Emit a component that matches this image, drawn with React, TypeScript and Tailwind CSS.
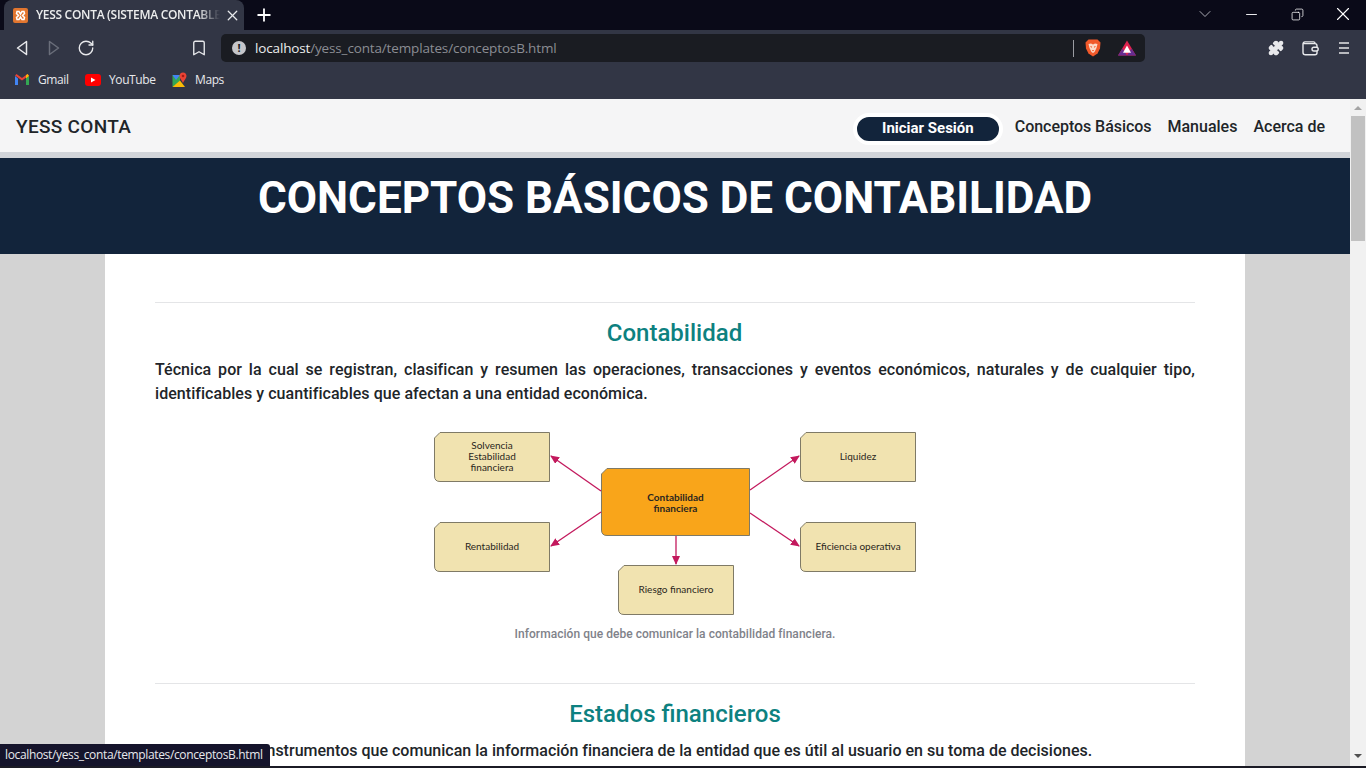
import { ChevronDown, Minus, X, Plus, Copy, RotateCw, Bookmark, Puzzle } from "lucide-react";

const bodyFont = "font-['Roboto','Liberation_Sans',sans-serif]";

function BackArrow() {
  return (
    <svg width="14" height="16" viewBox="0 0 14 16" fill="none" stroke="#e8e9ec" strokeWidth="1.5" strokeLinejoin="round">
      <path d="M11.5 1.5 L2.5 8 L11.5 14.5 Z" />
    </svg>
  );
}

function ForwardArrow() {
  return (
    <svg width="14" height="16" viewBox="0 0 14 16" fill="none" stroke="#6a6e7a" strokeWidth="1.5" strokeLinejoin="round">
      <path d="M2.5 1.5 L11.5 8 L2.5 14.5 Z" />
    </svg>
  );
}

function XamppIcon() {
  return (
    <div className="w-[15px] h-[15px] rounded-[2px] bg-[#e2762f] flex items-center justify-center">
      <svg width="11" height="11" viewBox="0 0 11 11" fill="none" stroke="#fff" strokeWidth="1.5">
        <path d="M2 1.5 L4 1.5 L5.5 4 L7 1.5 L9 1.5 L9.5 3.5 L7.5 5.5 L9.5 7.5 L9 9.5 L7 9.5 L5.5 7 L4 9.5 L2 9.5 L1.5 7.5 L3.5 5.5 L1.5 3.5 Z" />
      </svg>
    </div>
  );
}

function BraveIcon() {
  return (
    <svg width="16" height="18" viewBox="0 0 16 18">
      <path d="M3.5 0.5 L12.5 0.5 L15.5 3.5 L15 9.5 L12.5 14.5 L8 17.5 L3.5 14.5 L1 9.5 L0.5 3.5 Z" fill="#f1592a" />
      <path d="M3.5 5 L6 4.5 L8 5.5 L10 4.5 L12.5 5 L11.5 9 L9.5 13 L8 14 L6.5 13 L4.5 9 Z" fill="#fbd9c8" />
      <path d="M5 7 L7 7.6 L6.6 9 Z M11 7 L9 7.6 L9.4 9 Z M6.8 11 L9.2 11 L8 12.4 Z" fill="#f1592a" />
    </svg>
  );
}

function BatIcon() {
  return (
    <svg width="18" height="16" viewBox="0 0 18 16">
      <path d="M9 0.5 L18 15.5 L0 15.5 Z" fill="#e0234e" />
      <path d="M0 15.5 L4.5 8.5 L9 15.5 L13.5 8.5 L18 15.5 Z" fill="#662d91" />
      <path d="M9 5.5 L13 12.8 L5 12.8 Z" fill="#fff" />
    </svg>
  );
}

function WalletIcon() {
  return (
    <svg width="17" height="15" viewBox="0 0 17 15" fill="none" stroke="#e8e9ec" strokeWidth="1.4">
      <path d="M13 2.6 V2.2 C13 1.3 12.4 0.9 11.5 0.9 H3 C1.8 0.9 1 1.8 1 3 V11.5 C1 12.9 2 13.8 3.4 13.8 H13 C14.2 13.8 15 13 15 11.8 V4.8 C15 3.4 14.2 2.6 13 2.6 H1.5" />
      <rect x="10" y="6.2" width="6.2" height="3.8" rx="1.9" fill="#323645" />
    </svg>
  );
}

function MenuIcon() {
  return (
    <svg width="10" height="14" viewBox="0 0 10 14" stroke="#b8b9be" strokeWidth="2">
      <path d="M0 2 H10 M0 7 H10 M0 12 H10" />
    </svg>
  );
}

function GmailIcon() {
  return (
    <svg width="14" height="11" viewBox="0 0 14 11">
      <path d="M0 2 L0 11 L3 11 L3 4.5 Z" fill="#4285f4" />
      <path d="M14 2 L14 11 L11 11 L11 4.5 Z" fill="#34a853" />
      <path d="M0 1.5 L7 6.5 L14 1.5 L12.5 0 L7 4 L1.5 0 Z" fill="#ea4335" />
      <path d="M11 4.5 L14 2 L12.5 0 L11 1.2 Z" fill="#fbbc04" />
    </svg>
  );
}

function YoutubeIcon() {
  return (
    <div className="w-[16px] h-[12px] rounded-[3px] bg-[#f00] flex items-center justify-center">
      <svg width="6" height="6" viewBox="0 0 6 6">
        <path d="M1 0.5 L5.5 3 L1 5.5 Z" fill="#fff" />
      </svg>
    </div>
  );
}

function MapsIcon() {
  return (
    <svg width="15" height="16" viewBox="0 0 15 16">
      <path d="M0.5 3 L8 3 L8 10 L0.5 15 Z" fill="#34a853" />
      <path d="M0.5 15 L8 8.5 L13 15 Z" fill="#fbbc04" />
      <path d="M0.5 3 L8 3 L4 8 Z" fill="#4285f4" />
      <path d="M11 0.5 C13.2 0.5 14.5 2.2 14.5 4 C14.5 6.5 11.8 8.5 11 11 C10.2 8.5 7.5 6.5 7.5 4 C7.5 2.2 8.8 0.5 11 0.5 Z" fill="#ea4335" />
      <circle cx="11" cy="4" r="1.3" fill="#a61c14" />
    </svg>
  );
}

function Bookmarks() {
  const items = [
    { label: "Gmail", icon: <GmailIcon />, gap: "gap-[9px]", width: "w-[70px]" },
    { label: "YouTube", icon: <YoutubeIcon />, gap: "gap-[8px]", width: "w-[87px]" },
    { label: "Maps", icon: <MapsIcon />, gap: "gap-[8px]", width: "w-[70px]" },
  ];
  return (
    <div className="h-[33px] bg-[#323645] flex items-center pl-[15px] pb-[6px]">
      {items.map((b) => (
        <div key={b.label} className={`flex items-center ${b.gap} ${b.width}`}>
          {b.icon}
          <span className="text-[12px] text-[#e8e9ec] tracking-[-0.4px]">{b.label}</span>
        </div>
      ))}
    </div>
  );
}

function BrowserChrome() {
  return (
    <div className="font-['Open_Sans','Liberation_Sans',sans-serif]">
      <div className="h-[30px] bg-[#0a0a18] flex items-end pl-[4px]">
        <div className="w-[240px] h-[30px] bg-[#323645] rounded-t-[8px] flex items-center pl-[9px]">
          <XamppIcon />
          <span className="ml-[8px] text-[12px] font-semibold text-[#eceded] w-[184px] whitespace-nowrap overflow-hidden tracking-[-0.3px] [mask-image:linear-gradient(to_right,black_88%,transparent)]">
            YESS CONTA (SISTEMA CONTABLE)
          </span>
          <div className="w-[24px] flex justify-center">
            <X size={17} strokeWidth={1.8} className="text-[#e8e9ec]" />
          </div>
        </div>
        <div className="w-[40px] h-[30px] flex items-center justify-center">
          <Plus size={20} strokeWidth={2.2} className="text-white" />
        </div>
        <div className="flex-1" />
        <div className="h-[28px] self-start flex items-center">
          <div className="w-[46px] flex justify-center">
            <ChevronDown size={20} strokeWidth={1} className="text-[#c8c9d0]" />
          </div>
          <div className="w-[46px] flex justify-center">
            <Minus size={17} strokeWidth={1.3} className="text-white" />
          </div>
          <div className="w-[46px] flex justify-center">
            <Copy size={13} strokeWidth={1.4} className="text-white -scale-x-100" />
          </div>
          <div className="w-[46px] flex justify-center">
            <X size={22} strokeWidth={1.2} className="text-white" />
          </div>
        </div>
      </div>
      <div className="h-[36px] bg-[#323645] flex items-center">
        <div className="w-[221px] flex items-center pl-[6px]">
          <div className="w-[32px] flex justify-center">
            <BackArrow />
          </div>
          <div className="w-[32px] flex justify-center">
            <ForwardArrow />
          </div>
          <div className="w-[32px] flex justify-center">
            <RotateCw size={18} strokeWidth={1.8} className="text-[#e8e9ec]" />
          </div>
          <div className="w-[32px] ml-[81px] flex justify-center">
            <Bookmark size={18} strokeWidth={1.8} className="text-[#e8e9ec]" />
          </div>
        </div>
        <div className="w-[924px] h-[28px] bg-[#1a1c22] rounded-[5px] flex items-center pl-[11px] pr-[9px]">
          <div className="w-[14px] h-[14px] rounded-full bg-[#c5c6ca] flex items-center justify-center text-[11px] font-bold text-[#1a1c22]">
            !
          </div>
          <span className="ml-[9px] text-[13.5px] tracking-[-0.15px]">
            <span className="text-[#eceded]">localhost</span>
            <span className="text-[#8b8d93]">/yess_conta/templates/conceptosB.html</span>
          </span>
          <div className="flex-1" />
          <div className="w-px h-[17px] bg-[#9a9ca2] mr-[11px]" />
          <BraveIcon />
          <div className="ml-[17px]">
            <BatIcon />
          </div>
        </div>
        <div className="flex-1 flex items-center pl-[123px]">
          <Puzzle size={16} strokeWidth={2} className="text-[#e8e9ec] fill-[#e8e9ec]" />
          <div className="ml-[18px]">
            <WalletIcon />
          </div>
          <div className="ml-[20px]">
            <MenuIcon />
          </div>
        </div>
      </div>
      <Bookmarks />
    </div>
  );
}

function Navbar() {
  return (
    <div className="h-[53px] bg-[#f5f5f6] flex items-center justify-between pl-[16px] pr-[25px] pt-[2px] text-[#212529]">
      <span className="text-[19px] font-medium tracking-[0.3px] mt-[2px]">YESS CONTA</span>
      <div className="flex items-center text-[16px] font-medium">
        <button className="w-[150px] h-[32px] mt-[4px] rounded-full bg-[#12243b] border-[4px] border-white text-white text-[15px] font-bold">
          Iniciar Sesión
        </button>
        <span className="ml-[12px] tracking-[-0.05px]">Conceptos Básicos</span>
        <span className="ml-[16px]">Manuales</span>
        <span className="ml-[16px]">Acerca de</span>
      </div>
    </div>
  );
}

function DiagramBox({ x, y, w, h, lines, fill, bold }: { x: number; y: number; w: number; h: number; lines: string[]; fill: string; bold?: boolean }) {
  const d = `M${x + 6} ${y + 0.5} H${x + w - 0.5} V${y + h - 0.5} H${x + 6} Q${x + 0.5} ${y + h - 0.5} ${x + 0.5} ${y + h - 6} V${y + 6} Z`;
  const mid = y + h / 2;
  const start = mid - ((lines.length - 1) * 11) / 2;
  return (
    <g>
      <path d={d} fill={fill} stroke="#7f7a66" strokeWidth="1" />
      {lines.map((l, i) => (
        <text
          key={l}
          x={x + w / 2}
          y={start + i * 11 + (bold ? 4 : 3)}
          textAnchor="middle"
          fontSize="10"
          fontWeight={bold ? 700 : 400}
          fontFamily="Lato, sans-serif"
          fill="#2a2620"
        >
          {l}
        </text>
      ))}
    </g>
  );
}

function DiagramArrow({ x1, y1, x2, y2 }: { x1: number; y1: number; x2: number; y2: number }) {
  return <line x1={x1} y1={y1} x2={x2} y2={y2} stroke="#c3195d" strokeWidth="1.3" markerEnd="url(#head)" />;
}

// diagrama de la contabilidad financiera
function Diagram() {
  return (
    <svg width="484" height="186" viewBox="0 0 484 186" className="block">
      <defs>
        <marker id="head" markerWidth="9" markerHeight="8" refX="8" refY="4" orient="auto" markerUnits="userSpaceOnUse">
          <path d="M0 0 L9 4 L0 8 Z" fill="#c3195d" />
        </marker>
      </defs>
      <DiagramBox x={1} y={3} w={116} h={50} lines={["Solvencia", "Estabilidad", "financiera"]} fill="#f1e3b0" />
      <DiagramBox x={367} y={3} w={116} h={50} lines={["Liquidez"]} fill="#f1e3b0" />
      <DiagramBox x={1} y={93} w={116} h={50} lines={["Rentabilidad"]} fill="#f1e3b0" />
      <DiagramBox x={367} y={93} w={116} h={50} lines={["Eficiencia operativa"]} fill="#f1e3b0" />
      <DiagramBox x={185} y={136} w={116} h={50} lines={["Riesgo financiero"]} fill="#f1e3b0" />
      <DiagramBox x={168} y={39} w={149} h={68} lines={["Contabilidad", "financiera"]} fill="#f9a51a" bold />
      <DiagramArrow x1={168} y1={62} x2={118} y2={27} />
      <DiagramArrow x1={168} y1={83} x2={118} y2={117} />
      <DiagramArrow x1={317} y1={61} x2={366} y2={27} />
      <DiagramArrow x1={317} y1={84} x2={366} y2={117} />
      <DiagramArrow x1={243} y1={107} x2={243} y2={135} />
    </svg>
  );
}

function Card() {
  return (
    <div className="w-[1140px] mx-auto bg-white px-[50px] pt-[48px] h-[600px] text-[#212529]">
      <hr className="border-[#e4e5e7]" />
      <h2 className="text-center text-[24px] font-medium text-[#0d8180] mt-[14px] leading-[32px] pr-[1px]">Contabilidad</h2>
      <p className="mt-[9px] text-[16px] font-medium leading-[24px] text-justify tracking-[0.05px]">
        Técnica por la cual se registran, clasifican y resumen las operaciones, transacciones y eventos económicos, naturales y de cualquier tipo, identificables y cuantificables que afectan a una entidad económica.
      </p>
      <div className="flex justify-center mt-[23px]">
        <Diagram />
      </div>
      <p className="text-center text-[12px] font-medium text-[#80828a] mt-[10px] leading-[18px] tracking-[0.04px]">
        Información que debe comunicar la contabilidad financiera.
      </p>
      <hr className="border-[#e4e5e7] mt-[40px]" />
      <h2 className="text-center text-[24px] font-medium text-[#0d8180] mt-[14px] leading-[32px]">Estados financieros</h2>
      <p className="mt-[9px] pl-[11px] text-[16px] font-medium leading-[24px] tracking-[0.01px]">
        Son aquellos instrumentos que comunican la información financiera de la entidad que es útil al usuario en su toma de decisiones.
      </p>
    </div>
  );
}

function Scrollbar() {
  return (
    <div className="w-[16px] bg-[#f1f1f1] flex flex-col items-center shrink-0">
      <div className="h-[17px] flex items-center justify-center">
        <div className="w-0 h-0 border-x-[4px] border-x-transparent border-b-[4px] border-b-[#a3a3a3]" />
      </div>
      <div className="w-[14px] h-[125px] bg-[#c1c1c1]" />
      <div className="flex-1" />
      <div className="h-[16px] mb-[4px] flex items-center justify-center">
        <div className="w-0 h-0 border-x-[4px] border-x-transparent border-t-[4px] border-t-[#505050]" />
      </div>
    </div>
  );
}

export default function App() {
  return (
    <div className="relative h-screen overflow-hidden flex flex-col bg-[#d3d3d3]">
      <BrowserChrome />
      <div className={`flex flex-1 min-h-0 ${bodyFont}`}>
        <div className="flex-1 min-w-0 overflow-hidden">
          <Navbar />
          <div className="h-[6px] bg-[#d1d4d9]" />
          <div className="h-[96px] bg-[#12243b] flex items-center justify-center pb-[16px]">
            <h1 className="text-[44px] font-bold text-white leading-none">CONCEPTOS BÁSICOS DE CONTABILIDAD</h1>
          </div>
          <Card />
        </div>
        <Scrollbar />
      </div>
      {/* estado del enlace abajo a la izquierda */}
      <div className="absolute left-0 bottom-[2px] h-[22px] w-[270px] bg-[#15142b] rounded-tr-[3px] flex items-center pl-[5px] text-[12px] text-[#e8e9ec] font-['Open_Sans',sans-serif] tracking-[-0.36px] whitespace-nowrap">
        localhost/yess_conta/templates/conceptosB.html
      </div>
      <div className="absolute left-0 right-0 bottom-0 h-[2px] bg-[#1b1b25]" />
    </div>
  );
}
